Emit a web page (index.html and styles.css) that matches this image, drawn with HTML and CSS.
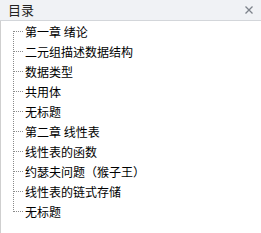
FILE: index.html
```html
<!DOCTYPE html>
<html lang="zh">
<head>
<meta charset="utf-8">
<link rel="stylesheet" href="styles.css">
</head>
<body>
<div class="panel">
  <div class="header">
    <span class="title">目录</span>
    <svg class="close" width="8" height="8" viewBox="0 0 8 8"><path d="M0.5 0.5L7.5 7.5M7.5 0.5L0.5 7.5" stroke="#7d838b" stroke-width="1.3" fill="none"/></svg>
  </div>
  <div class="body">
    <ul class="tree">
      <li class="item">第一章 绪论</li>
      <li class="item">二元组描述数据结构</li>
      <li class="item">数据类型</li>
      <li class="item">共用体</li>
      <li class="item">无标题</li>
      <li class="item">第二章 线性表</li>
      <li class="item">线性表的函数</li>
      <li class="item">约瑟夫问题（猴子王）</li>
      <li class="item">线性表的链式存储</li>
      <li class="item">无标题</li>
    </ul>
  </div>
</div>
</body>
</html>
```
FILE: styles.css
```css
html, body { margin: 0; padding: 0; background: #fff; }
body { width: 261px; height: 233px; overflow: hidden; font-family: "Noto Sans CJK SC", "Microsoft YaHei", sans-serif; }
.panel { display: flex; flex-direction: column; height: 233px; }
.header {
  height: 20px;
  background: #f0f2f5;
  border-bottom: 1px solid #d3d6da;
  display: flex;
  align-items: center;
  justify-content: space-between;
  padding: 0 8px 0 8px;
}
.title { font-size: 13px; color: #222; line-height: 20px; }
.close { display: block; }
.body { flex: 1; border-left: 1px solid #cfcfcf; }
.tree { list-style: none; margin: 0; padding: 0 0 0 12px; }
.item {
  height: 20px;
  display: flex;
  align-items: center;
  font-size: 12px;
  color: #000;
  background-image: repeating-linear-gradient(to bottom, #8a8a8a 0 1px, transparent 1px 2px);
  background-size: 1px 100%;
  background-repeat: no-repeat;
  background-position: 0 0;
}
.item:first-child { background-size: 1px 50%; background-position: 0 10px; }
.item:last-child { background-size: 1px 11px; }
.item::before {
  content: "";
  width: 9px;
  height: 1px;
  margin-left: 1px;
  margin-right: 2px;
  background-image: repeating-linear-gradient(to right, #8a8a8a 0 1px, transparent 1px 2px);
}
```
